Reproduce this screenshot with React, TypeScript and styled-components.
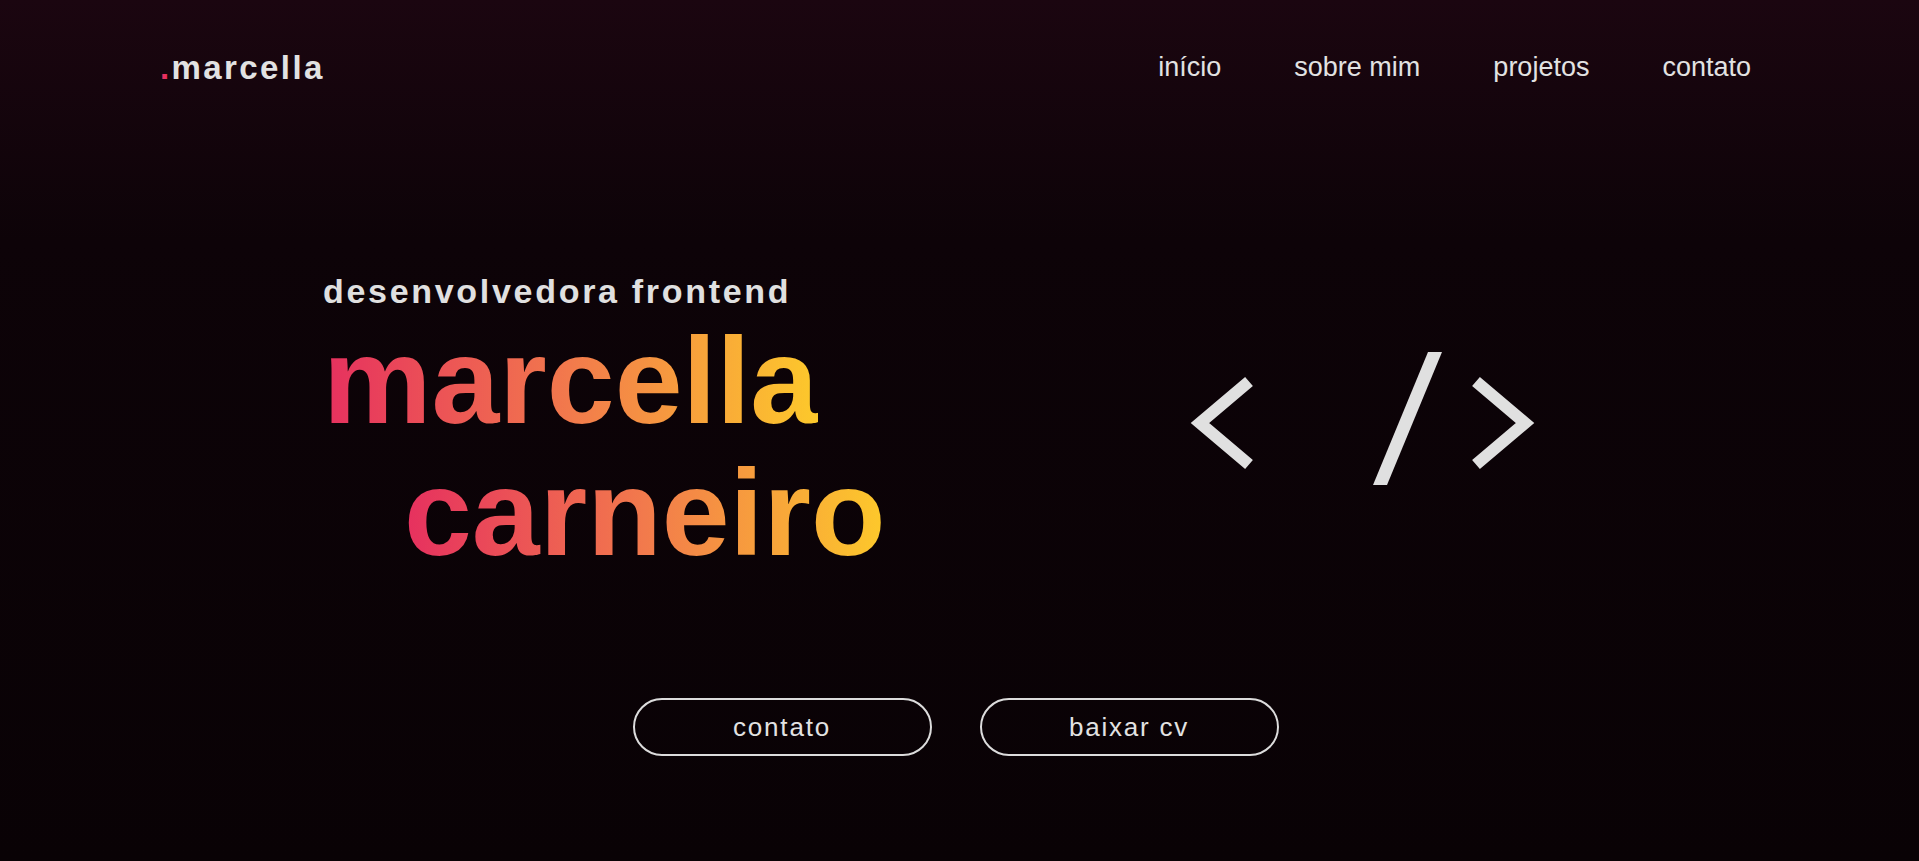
import React from "react";
import styled, { createGlobalStyle } from "styled-components";

const GlobalStyle = createGlobalStyle`
  html {
    background: #090205;
  }
  body {
    margin: 0;
    background: #090205;
    font-family: "Liberation Sans", Arial, sans-serif;
    color: #e2e2e2;
  }
`;

const Page = styled.div`
  width: 100%;
`;

const HomeSection = styled.section`
  height: 861px;
  box-sizing: border-box;
  padding: 0 168px 0 160px;
  background: linear-gradient(180deg, #1b0610 0%, #0d0308 28%, #090205 100%);
`;

const Header = styled.header`
  display: flex;
  justify-content: space-between;
  align-items: flex-start;
  padding-top: 48px;
  height: 134px;
  box-sizing: border-box;
`;

const Logo = styled.a`
  font-size: 33px;
  line-height: 40px;
  font-weight: 700;
  letter-spacing: 2.4px;
  color: #e2e2e2;
  text-decoration: none;
`;

const Dot = styled.span`
  color: #e8305f;
`;

const Nav = styled.nav`
  display: flex;
  gap: 73px;
  margin-top: 3px;
`;

const NavLink = styled.a`
  font-size: 27px;
  line-height: 32px;
  color: #e2e2e2;
  text-decoration: none;
`;

const Hero = styled.div`
  display: grid;
  grid-template-columns: 1fr 1fr;
  padding-top: 137px;
`;

const TextCol = styled.div`
  padding-left: 163px;
`;

const Subtitle = styled.h2`
  margin: 0;
  font-size: 34px;
  line-height: 40px;
  font-weight: 700;
  letter-spacing: 2.7px;
  color: #e0e0e0;
`;

const Name = styled.h1`
  margin: 4px 0 0;
  font-size: 122px;
  line-height: 132px;
  font-weight: 700;
  white-space: nowrap;
`;

const NameLine = styled.span<{ $indent?: number }>`
  display: inline-block;
  margin-left: ${(p) => p.$indent ?? 0}px;
  background: linear-gradient(90deg, #e6305f 0%, #f27a4c 50%, #fdc92b 100%);
  -webkit-background-clip: text;
  background-clip: text;
  color: transparent;
`;

const Break = styled.br``;

const IconCol = styled.div`
  padding-left: 234px;
  padding-top: 81px;
`;

const CodeIcon = styled.svg`
  display: block;
  overflow: visible;
`;

const ButtonRow = styled.div`
  display: flex;
  justify-content: center;
  gap: 48px;
  margin-top: 119px;
  margin-left: -160px;
  margin-right: -160px;
`;

const OutlineButton = styled.a`
  box-sizing: border-box;
  width: 299px;
  height: 58px;
  border: 2px solid #dcdcdc;
  border-radius: 30px;
  display: flex;
  align-items: center;
  justify-content: center;
  font-size: 26px;
  letter-spacing: 1.8px;
  color: #e2e2e2;
  text-decoration: none;
  background: transparent;
`;

export default function App() {
  return (
    <Page>
      <GlobalStyle />
      <HomeSection id="inicio">
        <Header>
          <Logo href="#inicio">
            <Dot>.</Dot>marcella
          </Logo>
          <Nav>
            <NavLink href="#inicio">início</NavLink>
            <NavLink href="#sobre">sobre mim</NavLink>
            <NavLink href="#projetos">projetos</NavLink>
            <NavLink href="#contato">contato</NavLink>
          </Nav>
        </Header>
        <Hero>
          <TextCol>
            <Subtitle>desenvolvedora frontend</Subtitle>
            <Name>
              <NameLine>marcella</NameLine>
              <Break />
              <NameLine $indent={81}>carneiro</NameLine>
            </Name>
          </TextCol>
          <IconCol>
            <CodeIcon width="345" height="133" viewBox="0 0 345 133">
              <polyline
                points="59,29.5 10,71 59,112.5"
                fill="none"
                stroke="#e0e0e0"
                strokeWidth="12"
                strokeLinecap="butt"
                strokeLinejoin="miter"
              />
              <polygon points="238,0 252,0 197,133 183,133" fill="#e0e0e0" />
              <polyline
                points="286,29.5 335,71 286,112.5"
                fill="none"
                stroke="#e0e0e0"
                strokeWidth="12"
                strokeLinecap="butt"
                strokeLinejoin="miter"
              />
            </CodeIcon>
          </IconCol>
        </Hero>
        <ButtonRow>
          <OutlineButton href="#contato">contato</OutlineButton>
          <OutlineButton href="#cv">baixar cv</OutlineButton>
        </ButtonRow>
      </HomeSection>
    </Page>
  );
}
